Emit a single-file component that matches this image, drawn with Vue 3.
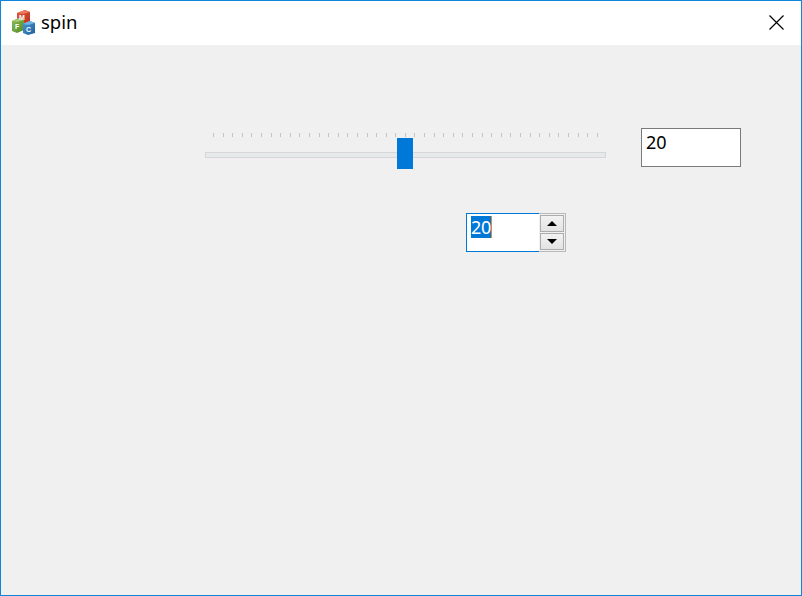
<template>
    <div class="window">
        <!-- title bar -->
        <header class="titlebar">
            <svg class="app-icon" viewBox="0 0 24 26" width="24" height="26">
                <defs>
                    <linearGradient id="red" x1="0" y1="0" x2="1" y2="1">
                        <stop offset="0" stop-color="#e4583c" />
                        <stop offset="1" stop-color="#b8301f" />
                    </linearGradient>
                    <linearGradient id="green" x1="0" y1="0" x2="1" y2="1">
                        <stop offset="0" stop-color="#8fbc55" />
                        <stop offset="1" stop-color="#4f8a2a" />
                    </linearGradient>
                    <linearGradient id="blue" x1="0" y1="0" x2="1" y2="1">
                        <stop offset="0" stop-color="#4a98d4" />
                        <stop offset="1" stop-color="#1d5f9c" />
                    </linearGradient>
                </defs>
                <!-- red cube -->
                <path d="M5 3 L13 0 L18 2 L18 11 L11 14 L5 12 Z" fill="url(#red)" />
                <path d="M5 3 L13 0 L18 2 L11 4 Z" fill="#ea7a5c" />
                <!-- green cube -->
                <path d="M0 11 L7 8 L12 10 L12 20 L5 23 L0 21 Z" fill="url(#green)" />
                <path d="M0 11 L7 8 L12 10 L5 12 Z" fill="#a3c96c" />
                <!-- blue cube -->
                <path d="M11 14 L18 11 L23 13 L23 23 L16 25 L11 23 Z" fill="url(#blue)" />
                <path d="M11 14 L18 11 L23 13 L16 15 Z" fill="#6fb3e0" />
                <text x="7" y="10" class="cube-letter">M</text>
                <text x="3" y="19" class="cube-letter">F</text>
                <text x="14" y="22" class="cube-letter">C</text>
            </svg>
            <span class="title">spin</span>
            <svg class="close" viewBox="0 0 15 15" width="15" height="15">
                <path d="M0.5 0.5 L14.5 14.5 M14.5 0.5 L0.5 14.5" stroke="#000" stroke-width="1.2" fill="none" />
            </svg>
        </header>

        <main class="content">
            <!-- slider + line edit -->
            <div class="slider-row">
                <div class="slider">
                    <div class="ticks">
                        <i v-for="n in tickCount" :key="n" class="tick"></i>
                    </div>
                    <div class="groove">
                        <div class="thumb"></div>
                    </div>
                </div>
                <div class="line-edit">{{ value }}</div>
            </div>

            <!-- spin box -->
            <div class="spinbox">
                <div class="spin-edit">
                    <span class="selected">{{ value }}</span><i class="caret"></i>
                </div>
                <div class="spin-buttons">
                    <button class="spin-btn" type="button">
                        <span class="arrow up"></span>
                    </button>
                    <button class="spin-btn" type="button">
                        <span class="arrow down"></span>
                    </button>
                </div>
            </div>
        </main>
    </div>
</template>

<script setup>
import { ref } from "vue";

const value = ref(20);
const tickCount = 41;
</script>

<style scoped>
* {
    box-sizing: border-box;
}

.window {
    width: 802px;
    height: 596px;
    border: 1px solid #0f85dc;
    background: #f0f0f0;
    display: flex;
    flex-direction: column;
    overflow: hidden;
    font-family: "Noto Sans", "Open Sans", sans-serif;
    color: #000;
}

/* title bar */
.titlebar {
    height: 44px;
    background: #fff;
    display: flex;
    align-items: center;
    padding: 0 17px 0 11px;
    flex-shrink: 0;
}

.cube-letter {
    font-size: 7px;
    font-weight: 700;
    fill: #fff;
    font-family: "Liberation Sans", sans-serif;
}

.title {
    margin: 0 0 2px 5px;
    font-size: 18.5px;
    line-height: 24px;
}

.close {
    margin: 0 0 1px auto;
}

.content {
    flex: 1;
    padding-top: 83px;
}

/* slider */
.slider-row {
    display: flex;
    align-items: flex-start;
    margin-left: 204px;
    gap: 35px;
}

.slider {
    width: 401px;
    padding-top: 5px;
}

.ticks {
    display: flex;
    justify-content: space-between;
    margin: 0 8px;
    height: 4px;
}

.tick {
    display: block;
    width: 1px;
    height: 4px;
    background: #c4c4c4;
}

.groove {
    position: relative;
    height: 6px;
    margin-top: 15px;
    background: #e7eaea;
    border: 1px solid #d6d6d6;
}

.thumb {
    position: absolute;
    left: 191px;
    top: -15px;
    width: 16px;
    height: 31px;
    background: #0078d7;
}

.line-edit {
    width: 100px;
    height: 39px;
    background: #fff;
    border: 1px solid #7a7a7a;
    padding: 1px 4px;
    font-size: 18px;
    line-height: 24px;
}

/* spin box */
.spinbox {
    display: flex;
    width: 100px;
    height: 39px;
    margin: 46px 0 0 465px;
}

.spin-edit {
    width: 73px;
    background: #fff;
    border: 1px solid #0078d7;
    border-right: none;
    padding: 2px 4px;
    display: flex;
    align-items: flex-start;
    font-size: 18px;
    line-height: 22px;
}

.selected {
    background: #0078d7;
    color: #fff;
    letter-spacing: -0.3px;
}

.caret {
    width: 1px;
    height: 22px;
    background: #e8862e;
}

.spin-buttons {
    flex: 1;
    border: 1px solid #b9b9b9;
    border-left: none;
    padding: 1px;
    display: flex;
    flex-direction: column;
    gap: 1px;
    background: #f0f0f0;
}

.spin-btn {
    flex: 1;
    padding: 0;
    border: 1px solid #adadad;
    background: linear-gradient(#f2f2f2, #e3e3e3);
    display: flex;
    align-items: center;
    justify-content: center;
}

.arrow {
    display: block;
    width: 0;
    height: 0;
    border-left: 5px solid transparent;
    border-right: 5px solid transparent;
}

.arrow.up {
    border-bottom: 5px solid #000;
}

.arrow.down {
    border-top: 5px solid #000;
}
</style>
